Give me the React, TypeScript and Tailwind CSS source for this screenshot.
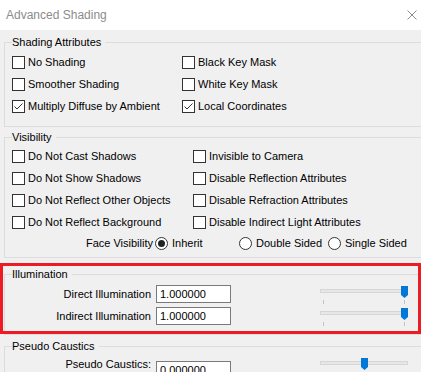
import React from "react";

function Check({ label, checked }: { label: string; checked?: boolean }) {
  return (
    <div className="flex h-[22px] items-center">
      <span className="flex h-[13px] w-[13px] shrink-0 items-center justify-center border border-[#333333] bg-white">
        {checked && (
          <svg width="11" height="11" viewBox="0 0 11 11">
            <polyline points="1.5,5.5 4,8 9.5,2.5" fill="none" stroke="#333333" strokeWidth="1" />
          </svg>
        )}
      </span>
      <span className="ml-[3px] whitespace-nowrap">{label}</span>
    </div>
  );
}

function Radio({ label, selected, width }: { label: string; selected?: boolean; width: string }) {
  return (
    <div className={`flex items-center ${width}`}>
      <span className="flex h-[13px] w-[13px] shrink-0 items-center justify-center rounded-full border border-[#333333] bg-white">
        {selected && <span className="h-[7px] w-[7px] rounded-full bg-[#222222]" />}
      </span>
      <span className="ml-[4px] whitespace-nowrap">{label}</span>
    </div>
  );
}

function Slider({ pos, ticks = true }: { pos: number; ticks?: boolean }) {
  return (
    <div className="relative h-[22px] w-[88px] shrink-0">
      <div className="absolute left-0 right-0 top-[6px] h-[4px] border border-[#d6d6d6] bg-[#e7e7e7]" />
      {ticks && (
        <>
          <div className="absolute left-[3px] top-[17px] h-[4px] w-px bg-[#c4c4c4]" />
          <div className="absolute left-[84px] top-[17px] h-[4px] w-px bg-[#c4c4c4]" />
        </>
      )}
      <svg className="absolute top-[3px]" style={{ left: pos }} width="7" height="12" viewBox="0 0 7 12">
        <path d="M0 0 H7 V9 L3.5 12 L0 9 Z" fill="#0078d7" />
      </svg>
    </div>
  );
}

function NumField({ value }: { value: string }) {
  return (
    <div className="flex h-[18px] w-[75px] shrink-0 items-center border border-[#7a7a7a] bg-white pl-[3px] text-black">
      {value}
    </div>
  );
}

export default function App() {
  return (
    <div className="relative h-[372px] w-[421px] overflow-hidden bg-[#f0f0f0] font-['Liberation_Sans',Arial,sans-serif] text-[11px] text-black">
      {/* title bar */}
      <div className="flex h-[30px] items-center justify-between bg-white pl-[6px] pr-[4px]">
        <span className="text-[12px] text-[#8c8c8c]">Advanced Shading</span>
        <svg width="10" height="10" viewBox="0 0 10 10" className="mr-[0px]">
          <path d="M0.5 0.5 L9.5 9.5 M9.5 0.5 L0.5 9.5" stroke="#8c8c8c" strokeWidth="1" />
        </svg>
      </div>

      <fieldset className="ml-[4px] mt-[5px] w-[440px] border border-[#dcdcdc] pb-[9px] pl-[7px] pt-[2px]">
        <legend className="pr-[4px] leading-[14px]">Shading Attributes</legend>
        <div className="grid grid-cols-[170px_1fr]">
          <Check label="No Shading" />
          <Check label="Black Key Mask" />
          <Check label="Smoother Shading" />
          <Check label="White Key Mask" />
          <Check label="Multiply Diffuse by Ambient" checked />
          <Check label="Local Coordinates" checked />
        </div>
      </fieldset>

      <fieldset className="ml-[4px] mt-[3px] w-[440px] border border-[#dcdcdc] pb-[3px] pl-[7px] pt-[1px]">
        <legend className="pr-[4px] leading-[14px]">Visibility</legend>
        <div className="grid grid-cols-[181px_1fr]">
          <Check label="Do Not Cast Shadows" />
          <Check label="Invisible to Camera" />
          <Check label="Do Not Show Shadows" />
          <Check label="Disable Reflection Attributes" />
          <Check label="Do Not Reflect Other Objects" />
          <Check label="Disable Refraction Attributes" />
          <Check label="Do Not Reflect Background" />
          <Check label="Disable Indirect Light Attributes" />
        </div>
        <div className="flex h-[21px] items-center">
          <span className="w-[141px] shrink-0 text-right">Face Visibility</span>
          <div className="ml-[2px] flex items-center">
            <Radio label="Inherit" selected width="w-[84px]" />
            <Radio label="Double Sided" width="w-[89px]" />
            <Radio label="Single Sided" width="w-[80px]" />
          </div>
        </div>
      </fieldset>

      <fieldset className="ml-[4px] mt-[9px] w-[440px] border border-[#dcdcdc] pb-[7px] pl-[7px] pt-[2px]">
        <legend className="pr-[4px] leading-[14px]">Illumination</legend>
        <div className="flex h-[22px] items-center">
          <span className="w-[139px] shrink-0 text-right">Direct Illumination</span>
          <div className="ml-[5px]">
            <NumField value="1.000000" />
          </div>
          <div className="ml-[89px]">
            <Slider pos={81} />
          </div>
        </div>
        <div className="flex h-[22px] items-center">
          <span className="w-[139px] shrink-0 text-right">Indirect Illumination</span>
          <div className="ml-[5px]">
            <NumField value="1.000000" />
          </div>
          <div className="ml-[89px]">
            <Slider pos={81} />
          </div>
        </div>
      </fieldset>

      <fieldset className="ml-[4px] mt-[4px] w-[440px] border border-[#dcdcdc] pb-[7px] pl-[7px]">
        <legend className="pr-[4px] leading-[14px]">Pseudo Caustics</legend>
        <div className="flex items-start">
          <span className="mt-[4px] w-[139px] shrink-0 text-right leading-[14px]">Pseudo Caustics:</span>
          <div className="ml-[5px] mt-[8px]">
            <NumField value="0.000000" />
          </div>
          <div className="ml-[89px] mt-[2px]">
            <Slider pos={41} ticks={false} />
          </div>
        </div>
      </fieldset>

      {/* highlight annotation */}
      <div className="pointer-events-none absolute left-0 top-[263px] h-[71px] w-[421px] border-[3px] border-[#ed1c24]" />
    </div>
  );
}
